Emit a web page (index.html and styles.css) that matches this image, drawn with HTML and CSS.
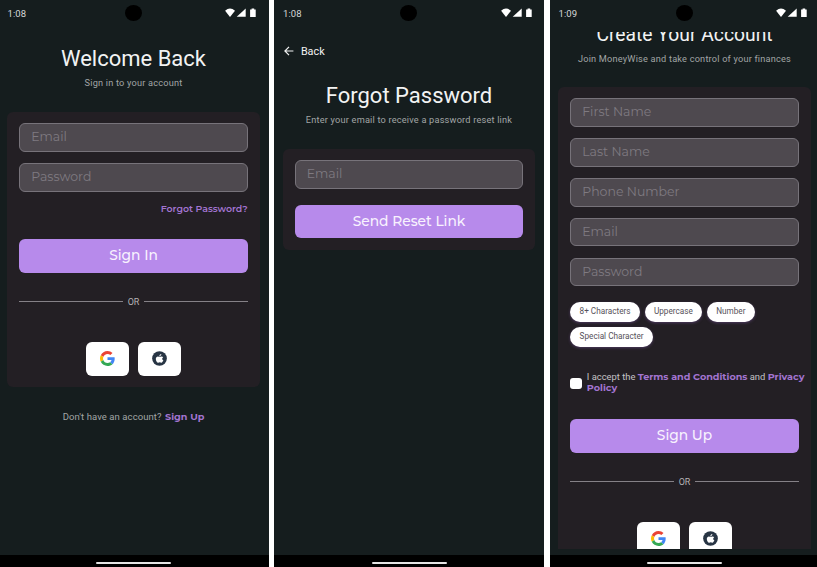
FILE: index.html
```html
<!DOCTYPE html>
<html lang="en">
<head>
<meta charset="utf-8">
<title>MoneyWise</title>
<link rel="stylesheet" href="styles.css">
</head>
<body>
<svg class="defs" aria-hidden="true">
  <symbol id="status" viewBox="0 0 32 10">
    <path d="M.1 2.7Q5-1.5 10 2.7L5 9z"/><path d="M20.7.4v8.400h-9z"/><path d="M25.1 1.500h1.500V.5h2.600v1h1.500v7.400h-5.600z"/>
  </symbol>
  <symbol id="google" viewBox="0 0 48 48">
    <path fill="#EA4335" d="M24 9.5c3.54 0 6.71 1.22 9.21 3.6l6.85-6.85C35.9 2.38 30.47 0 24 0 14.62 0 6.51 5.38 2.56 13.22l7.98 6.19C12.43 13.72 17.74 9.5 24 9.5z"/>
    <path fill="#4285F4" d="M46.98 24.55c0-1.57-.15-3.09-.38-4.55H24v9.02h12.94c-.58 2.96-2.26 5.48-4.78 7.18l7.73 6c4.51-4.18 7.09-10.36 7.09-17.65z"/>
    <path fill="#FBBC05" d="M10.53 28.59c-.48-1.45-.76-2.99-.76-4.59s.27-3.14.76-4.59l-7.98-6.19C.92 16.46 0 20.12 0 24s.92 7.54 2.56 10.78l7.97-6.19z"/>
    <path fill="#34A853" d="M24 48c6.48 0 11.93-2.13 15.89-5.81l-7.73-6c-2.15 1.45-4.92 2.3-8.16 2.3-6.26 0-11.57-4.22-13.47-9.91l-7.98 6.19C6.51 42.62 14.62 48 24 48z"/>
  </symbol>
  <symbol id="apple" viewBox="0 0 30 30">
    <circle cx="15" cy="15" r="14.7" fill="#283544"/>
    <path fill="#fff" d="M18.6 5.9c.2 1.3-.4 2.5-1.1 3.3-.7.9-1.8 1.4-2.8 1.4-.2-1.2.3-2.4 1-3.2.8-.9 1.9-1.4 2.9-1.5zM22.3 12.4c-1.3.8-1.9 1.8-1.9 3.1 0 1.5.9 2.7 2.3 3.2-.7 2.1-2.3 4.7-4.1 4.7-1.2 0-1.7-.7-3.1-.7s-2 .7-3.1.7c-2.3 0-4.8-4-4.8-7.6 0-3.2 2-5 4.2-5 1.5 0 2.6.9 3.5.9s2.2-1 3.9-.9c1.3 0 2.4.6 3.1 1.6z"/>
  </symbol>
</svg>
<main class="gallery">
  <section class="phone">
    <header class="status"><span class="time">1:08</span><i class="camera"></i><svg class="signals"><use href="#status"/></svg></header>
    <div class="view">
      <h1 class="title">Welcome Back</h1>
      <p class="sub">Sign in to your account</p>
      <div class="card">
        <div class="fields"><div class="field">Email</div><div class="field">Password</div></div>
        <a class="forgot">Forgot Password?</a>
        <button class="btn">Sign In</button>
        <div class="or">OR</div>
        <div class="socials"><button class="social"><svg><use href="#google"/></svg></button><button class="social"><svg><use href="#apple"/></svg></button></div>
      </div>
      <p class="switch">Don't have an account? <a class="link">Sign Up</a></p>
    </div>
    <footer class="nav"><i class="handle"></i></footer>
  </section>
  <section class="phone">
    <header class="status"><span class="time">1:08</span><i class="camera"></i><svg class="signals"><use href="#status"/></svg></header>
    <div class="view">
      <a class="back"><svg class="arrow" viewBox="0 0 10 10"><path d="M9.4 5H1M5 .9.9 5 5 9.1"/></svg>Back</a>
      <h1 class="title">Forgot Password</h1>
      <p class="sub">Enter your email to receive a password reset link</p>
      <div class="card card-reset">
        <div class="fields"><div class="field">Email</div></div>
        <button class="btn btn-reset">Send Reset Link</button>
      </div>
    </div>
    <footer class="nav"><i class="handle"></i></footer>
  </section>
  <section class="phone">
    <header class="status"><span class="time">1:09</span><i class="camera"></i><svg class="signals"><use href="#status"/></svg></header>
    <div class="view">
      <h1 class="title title-scrolled">Create Your Account</h1>
      <p class="sub">Join MoneyWise and take control of your finances</p>
      <div class="card card-signup">
        <div class="fields"><div class="field">First Name</div><div class="field">Last Name</div><div class="field">Phone Number</div><div class="field">Email</div><div class="field">Password</div></div>
        <div class="chips"><span class="chip">8+ Characters</span><span class="chip">Uppercase</span><span class="chip">Number</span><span class="chip">Special Character</span></div>
        <div class="terms"><i class="check"></i><p class="terms-text">I accept the <a class="link">Terms and Conditions</a> and <a class="link">Privacy<br>Policy</a></p></div>
        <button class="btn btn-signup">Sign Up</button>
        <div class="or">OR</div>
        <div class="socials"><button class="social"><svg><use href="#google"/></svg></button><button class="social"><svg><use href="#apple"/></svg></button></div>
      </div>
    </div>
    <footer class="nav"><i class="handle"></i></footer>
  </section>
</main>
</body>
</html>
```
FILE: styles.css
```css
* { box-sizing: border-box; }
body { margin: 0; background: #fff; font-family: Roboto, "Liberation Sans", sans-serif; overflow: hidden; }
h1, p { margin: 0; font-weight: 400; }
button { border: 0; padding: 0; font: inherit; }
.defs { display: none; }

.gallery { display: flex; gap: 5.5px; width: 821px; margin-left: -1.5px; height: 567px; }
.phone { flex: 0 0 270px; min-width: 0; display: flex; flex-direction: column; background: #151d1e; }

.status { flex: 0 0 32px; display: grid; grid-template-columns: 1fr 17px 1fr; align-items: center; padding: 0 11.5px 6px 9px; }
.time { color: #d6d8d8; font-size: 9.5px; letter-spacing: .1px; }
.camera { width: 17px; height: 16px; border-radius: 50%; background: #000; margin-left: .9px; }
.signals { width: 32px; height: 10px; fill: #fff; justify-self: end; }

.view { flex: 0 0 517px; overflow: hidden; padding: 0 8.8px; }
.title { margin-top: 14px; color: #f2f3f3; font-size: 22px; line-height: 26px; text-align: center; white-space: nowrap; }
.sub { margin-top: 5px; color: #a1a5a5; font-size: 9.2px; line-height: 12px; letter-spacing: .2px; text-align: center; white-space: nowrap; }
.title-scrolled { margin-top: -10px; font-size: 19.3px; }
.back { display: flex; align-items: center; gap: 6.5px; height: 14px; margin-top: 12px; padding-left: 1.6px; color: #f2f3f3; font-size: 10.8px; }
.back + .title { margin-top: 25px; }
.arrow { width: 10px; height: 10px; fill: none; stroke: #f2f3f3; stroke-width: 1.2; }

.card { margin-top: 22.7px; padding: 11.4px 12px 11.6px; border-radius: 6px; background: #231f24; }
.fields { display: grid; gap: 11.1px; }
.field { height: 28.7px; padding: 0 10.9px; border: 1px solid #77737a; border-radius: 6px; background: #4e494f; color: #7f7a81; font: 12.5px/26px Montserrat, Inter, sans-serif; }
.forgot { display: block; margin-top: 11.3px; color: #a274d0; font: 600 9.4px/12px Montserrat, Inter, sans-serif; text-align: right; }
.btn { display: block; width: 100%; height: 33.4px; margin-top: 24.3px; border-radius: 6px; background: #b78aeb; color: #f8f2fe; font: 500 13.8px/32px Montserrat, Inter, sans-serif; padding-bottom: 1.5px; }
.btn-reset { margin-top: 15.5px; }
.or { display: flex; align-items: center; gap: 5px; margin-top: 23.3px; color: #b4b1b5; font-size: 9px; line-height: 12px; }
.or::before, .or::after { content: ""; flex: 1; height: 1px; background: #858187; }
.socials { display: flex; justify-content: center; gap: 8.7px; margin-top: 34.3px; }
.social { display: grid; place-items: center; width: 43.5px; height: 33.4px; border-radius: 6px; background: #fff; }
.social svg { width: 15px; height: 15px; }
.switch { margin-top: 24px; color: #a1a5a5; font-size: 9.5px; line-height: 12px; letter-spacing: .08px; text-align: center; }
.link { color: #a274d0; font: 700 9.6px/11px Montserrat, Inter, sans-serif; letter-spacing: 0; }
.switch .link { margin-left: 1px; }

.card-reset { margin-top: 23px; }
.card-signup { margin-top: 22px; }
.chips { display: flex; flex-wrap: wrap; gap: 5.6px 4.8px; margin-top: 16.2px; }
.chip { height: 19.5px; padding: 0 9.3px; border-radius: 10px; background: #fff; box-shadow: 0 1px 3px #75539a80; color: #56515a; font-size: 8.2px; line-height: 19.5px; }
.terms { display: flex; align-items: center; gap: 5px; margin: 24.3px -8px 0 0; height: 22px; }
.check { flex: none; width: 11.5px; height: 11px; margin-top: 2px; border-radius: 3px; background: #fff; }
.terms-text { color: #c4c2c5; font-size: 9.4px; line-height: 11px; white-space: nowrap; }
.btn-signup { margin-top: 26px; }

.nav { flex: 0 0 12px; display: flex; justify-content: center; margin-top: 6px; padding-top: 6.5px; background: #000; }
.handle { width: 75px; height: 2.5px; border-radius: 2px; background: #e4e4e4; }
```
